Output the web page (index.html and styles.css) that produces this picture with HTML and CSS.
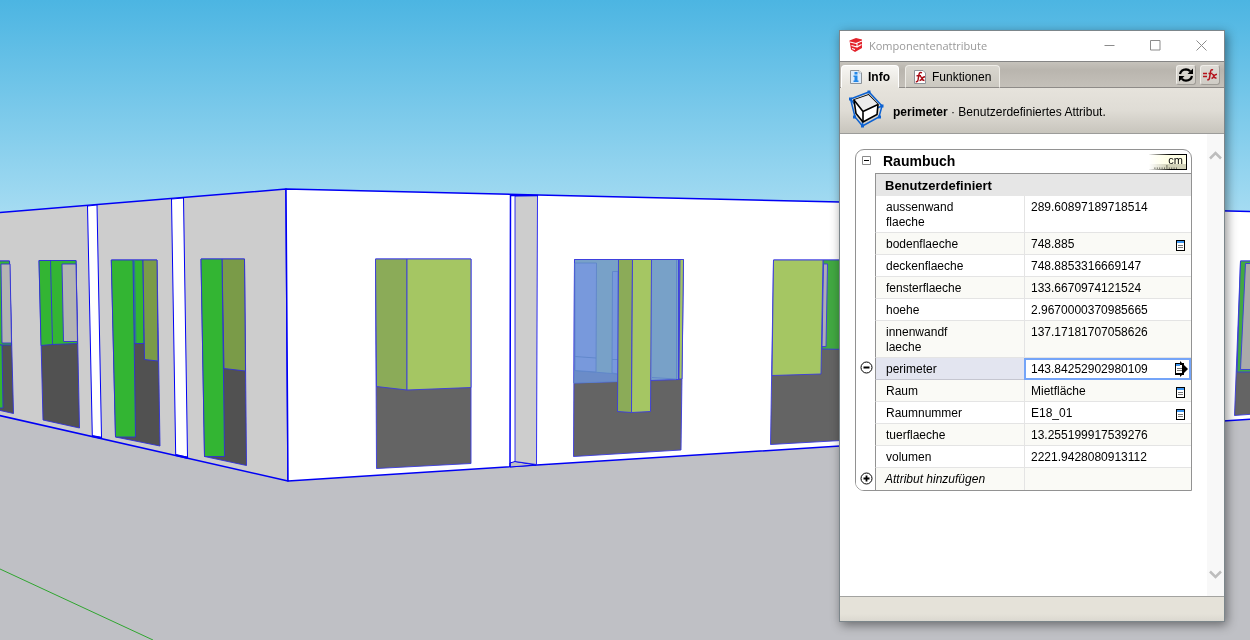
FILE: index.html
```html
<!DOCTYPE html>
<html lang="de">
<head>
<meta charset="utf-8">
<title>Komponentenattribute</title>
<link rel="stylesheet" href="styles.css">
</head>
<body>
<svg class="scene" viewBox="0 0 1250 640" preserveAspectRatio="xMinYMin slice" aria-hidden="true">
  <defs>
    <linearGradient id="sky" x1="0" y1="0" x2="0" y2="1">
      <stop offset="0" stop-color="#4cb5e2"/><stop offset="1" stop-color="#a6dcf2"/>
    </linearGradient>
  </defs>
  <rect width="1250" height="215" fill="url(#sky)"/>
  <rect y="213" width="1250" height="427" fill="#bfc0c5"/>
  <path d="M0 569 153 640" stroke="#2fa52f" fill="none"/>

  <!-- walls -->
  <g stroke="#0000f5" stroke-width="1.500" stroke-linejoin="round">
    <path d="M-5 213 286 189 288 481-5 414.500z" fill="#cdcdcd"/>
    <path d="M286 189 538 195 840 202 1255 211.500V419L840 446 537 465 288 481z" fill="#fff"/>
    <path d="M87.500 206 97 205 101.500 437.500 92.300 436z" fill="#fff" stroke-width="1"/>
    <path d="M171.500 199 183.500 198 187.500 457 175.700 455z" fill="#fff" stroke-width="1"/>
    <path d="M92 436 102 438M176 455 188 458" fill="none" stroke-width="2"/>
    <path d="M510 463 515 461.500 536 465 510 467z" fill="#bfc0c5" stroke-width="1"/>
    <path d="M515 196 537.500 195.500 536.500 464.500 515 461.500z" fill="#cdcdcd" stroke-width=".8"/>
    <path d="M510.500 195 510 467M510 195.500H538" fill="none"/>
  </g>

  <!-- openings of the side wall -->
  <g stroke="#3030d8" stroke-width=".9">
    <path d="M-2 261H9.500L13.500 413.500-2 410z" fill="#515151"/>
    <path d="M-2 261H9.500L11.500 345H-2z" fill="#33b533"/>
    <path d="M1 264H10L11.500 343H2z" fill="#b4b4b4"/>
    <path d="M-2 345H2L3 408H-2z" fill="#33b533"/>
    <path d="M39 260.500H76L79.500 428 43 420z" fill="#515151"/>
    <path d="M39 260.500H76L77.500 343.500 52 344.500 41 345.500z" fill="#33b533"/>
    <path d="M50.500 260 52.500 344" fill="none"/>
    <path d="M62 264H76L77.500 341.500H63.500z" fill="#b4b4b4"/>
    <path d="M111.300 260H157L160 446 115.500 437z" fill="#515151"/>
    <path d="M133 260H143L144 343.500H135z" fill="#33b533"/>
    <path d="M134 260 135.500 343" fill="none" stroke="#2a7f8a" stroke-width="2"/>
    <path d="M111.300 260H133L135.500 437H115.500z" fill="#33b533"/>
    <path d="M143 260H157L158 361 144.500 359.500z" fill="#7a9b48"/>
    <path d="M201 259H244.500L246.500 465.500 204.500 456.500z" fill="#515151"/>
    <path d="M222 259H244.500L245.500 371 224 368.500z" fill="#7a9b48"/>
    <path d="M201 259H222L224.500 456.500H204.500z" fill="#33b533"/>
  </g>

  <!-- openings of the front wall -->
  <g stroke="#3a3ae0" stroke-width=".9">
    <path d="M375.500 259H471V463.500L376.500 468.500z" fill="#646464"/>
    <path d="M375.500 259H407V390L376.500 386.500z" fill="#8bab58"/>
    <path d="M407 259H471V387.500L407 390z" fill="#a5c663"/>

    <path d="M574.500 259.500H683.500L681 450 573.500 456.500z" fill="#646464"/>
    <path d="M574.500 259.500H680L679 379.500 574 383z" fill="#78a1c8"/>
    <g stroke="#5f86c9">
      <path d="M574.500 370.500 618 374V381.500L574 383z" fill="#6b8cc8"/>
      <path d="M575 263H596.500L596 372 575 370.500z" fill="#7899dc"/>
      <path d="M612.500 271.500H618V374L612 373z" fill="#7899dc"/>
      <path d="M575 356.500 596 358M612 359.500H618M652 377.500 676 379M676.500 260V379" fill="none"/>
    </g>
    <path d="M680 259.500H683.500L682 379H679z" fill="#a5c663"/>
    <path d="M678.500 260V379" fill="none"/>
    <path d="M618.500 259.500H632.500L631.500 412.500 617.500 411.500z" fill="#8bab58"/>
    <path d="M632.500 259.500H651.500L650.500 411.500 631.500 412.500z" fill="#a5c663"/>

    <path d="M773.500 260H850V440L770.500 444.500z" fill="#646464"/>
    <path d="M823 260H850V349.500L822 349z" fill="#42a942"/>
    <path d="M823.500 264H827.500L826 346.500H822z" fill="#adadb3"/>
    <path d="M773.500 260H823L821 374 772 375.500z" fill="#a5c663"/>

    <path d="M1240.500 261H1255V414L1234.500 415.500z" fill="#646464"/>
    <path d="M1240.500 261H1255V372H1237z" fill="#42a942"/>
    <path d="M1245.500 263.500H1255V369.500H1240.500z" fill="#aaa"/>
  </g>
</svg>

<main class="desktop">
  <section class="window" aria-labelledby="window-title">
    <header class="titlebar">
      <svg class="app-icon" viewBox="0 0 14 14">
        <path d="M.5 2.500 7 0 13 1.500V10L6 14 2 11.500z" fill="#e3232c"/>
        <path d="M1 4 7 5.500 13 3M2.500 7.500 8 9V5.500M8 9 12.500 6.500M3 10.500 6 11.500" fill="none" stroke="#fff" stroke-width="1.100"/>
      </svg>
      <h1 class="title" id="window-title">Komponentenattribute</h1>
      <div class="window-buttons">
        <button class="window-button" aria-label="Minimieren"><svg viewBox="0 0 11 11"><path d="M.5 5.500H10.500"/></svg></button>
        <button class="window-button" aria-label="Maximieren"><svg viewBox="0 0 11 11"><path d="M.5.500H10V10H.5z"/></svg></button>
        <button class="window-button" aria-label="Schließen"><svg viewBox="0 0 11 11"><path d="M.5.500 10.500 10.500M10.500.500.500 10.500"/></svg></button>
      </div>
    </header>

    <nav class="tabbar">
      <button class="tab tab-active">
        <svg class="tab-icon" viewBox="0 0 12 14">
          <path d="M.5.500H9L11.500 3V13.500H.5z" fill="#dcebfa" stroke="#8d9399"/>
          <path d="M9 .5V3H11.500" fill="#fff" stroke="#8d9399" stroke-width=".6"/>
          <path d="M4.500 2H7.500V4.500H4.500zM3.500 5.500H7.500V10.500H8.500V12H3.500V10.500H4.500V7H3.500z" fill="#2287e8"/>
        </svg>Info
      </button>
      <button class="tab">
        <svg class="tab-icon" viewBox="0 0 12 14">
          <path d="M.5.500H9L11.500 3V13.500H.5z" fill="#fff" stroke="#8d9399"/>
          <path d="M8 2.800Q5.500 1.800 5 4.500L4 10Q3.500 12.300 1.800 11.500M2.500 5.800H7M6.200 7Q7.500 6.500 8 8.500T10.500 10.500M11 6.800Q9 6.800 8 8.700T5.500 10.500" fill="none" stroke="#a80d16" stroke-width="1.400"/>
        </svg>Funktionen
      </button>
      <div class="tools">
        <button class="tool" aria-label="Aktualisieren">
          <svg viewBox="0 0 16 16"><path d="M2 7Q3 2.500 8 2.300 10.500 2.300 12.200 4.200M14 9Q13 13.500 8 13.700 5.500 13.700 3.800 11.800" fill="none" stroke="#000" stroke-width="2.200"/><path d="M15 1.500V7H9.500zM1 14.500V9H6.500z"/></svg>
        </button>
        <button class="tool" aria-label="Formeln anzeigen">
          <svg viewBox="0 0 16 16"><path d="M1 6.500H5M1 9.500H5M11 3Q9 2 8.500 4.800L7.500 11Q7 13.300 5.300 12.500M6.500 6.500H10.500M10 7.500Q11.300 7 11.800 9T14.500 11.300M15 7.300Q12.800 7.500 11.800 9.300T9.500 11.500" fill="none" stroke="#b5121b" stroke-width="1.500"/></svg>
        </button>
      </div>
    </nav>

    <div class="summary">
      <svg class="cube" viewBox="0 0 36 38">
        <path d="M2.500 9 21 2 34 16 31 27 14.500 36 7 27z" fill="none" stroke="#0d62d2" stroke-width="1.500"/>
        <path d="M2.500 9 14.500 24 34 16M14.500 24V36" fill="none" stroke="#0d62d2" stroke-width="1.500"/>
        <path d="M6 10 20.500 5 30 14.500 29 24.500 15 32 8 23.500z" fill="#fff" stroke="#000" stroke-width="1.600"/>
        <path d="M6 10 20.500 5 30 14.500 15 21.500z" fill="#ececec"/>
        <path d="M6 10 15 21.500 30 14.500M15 21.500V32" fill="none" stroke="#000" stroke-width="1.600"/>
        <path d="M1 7.500H4V10.500H1zM19.500.500H22.500V3.500H19.500zM32.500 14.500H35.500V17.500H32.500zM30 25.500H33V28.500H30zM13 34.500H16V37.500H13zM5 25.500H8V28.500H5z" fill="#0d62d2"/>
      </svg>
      <p class="summary-text"><b>perimeter</b> · Benutzerdefiniertes Attribut.</p>
    </div>

    <div class="body">
      <div class="content">
        <section class="card">
          <header class="card-header">
            <button class="collapse" aria-label="Einklappen"><svg viewBox="0 0 9 9"><path d="M.5.500H8.500V8.500H.5z" fill="#fff" stroke="#8a8a8a"/><path d="M2 4.500H7" stroke="#000"/></svg></button>
            <h2 class="card-title">Raumbuch</h2>
            <button class="unit">cm
              <svg class="ruler" viewBox="0 0 37 5"><path d="M6.500 5V3M9.500 5V3M12.500 5V3M15.500 5V3M18.500 5V3M21.500 5V0M24.500 5V3M27.500 5V3M30.500 5V3M33.500 5V3" stroke="#55554a" fill="none"/></svg>
            </button>
          </header>
          <table class="attributes">
            <colgroup><col class="col-gutter"><col class="col-name"><col></colgroup>
            <thead>
              <tr><td class="gutter"></td><th class="group" colspan="2">Benutzerdefiniert</th></tr>
            </thead>
            <tbody>
              <tr><td class="gutter"></td><th class="name">aussenwand<br>flaeche</th><td class="value">289.60897189718514</td></tr>
              <tr><td class="gutter"></td><th class="name">bodenflaeche</th><td class="value"><div class="value-line">748.885<button class="details" aria-label="Details zu bodenflaeche"><svg viewBox="0 0 10 12"><path d="M0 1H9V12H0z"/><path d="M1 2H8V11H1z" fill="#fff"/><path d="M1 2H8V4H1z" fill="#3c96f0"/><path d="M2 6.500H7M2 8.500H7" stroke="#777"/></svg></button></div></td></tr>
              <tr><td class="gutter"></td><th class="name">deckenflaeche</th><td class="value">748.8853316669147</td></tr>
              <tr><td class="gutter"></td><th class="name">fensterflaeche</th><td class="value">133.6670974121524</td></tr>
              <tr><td class="gutter"></td><th class="name">hoehe</th><td class="value">2.9670000370985665</td></tr>
              <tr><td class="gutter"></td><th class="name">innenwandf<br>laeche</th><td class="value">137.17181707058626</td></tr>
              <tr class="selected">
                <td class="gutter"><button class="round" aria-label="Attribut entfernen"><svg viewBox="0 0 13 13"><circle cx="6.500" cy="6.500" r="5.500" fill="#fff" stroke="#000"/><path d="M3.500 6.500H9.500" stroke="#000" stroke-width="1.800"/></svg></button></td>
                <th class="name"><label for="perimeter">perimeter</label></th>
                <td class="value value-edit"><div class="editor"><input class="field" id="perimeter" value="143.84252902980109"><button class="more" aria-label="Details zu perimeter"><svg viewBox="0 0 13 16"><path d="M0 2H9V14H0z"/><path d="M1 3H7V12H1z" fill="#fff"/><path d="M1 3H5V5H1z" fill="#3c96f0"/><path d="M2 7.500H7M2 9.500H7" stroke="#777"/><path d="M5 0 13 8 5 16V12H7V4H5z"/></svg></button></div></td>
              </tr>
              <tr><td class="gutter"></td><th class="name">Raum</th><td class="value"><div class="value-line">Mietfläche<button class="details" aria-label="Details zu Raum"><svg viewBox="0 0 10 12"><path d="M0 1H9V12H0z"/><path d="M1 2H8V11H1z" fill="#fff"/><path d="M1 2H8V4H1z" fill="#3c96f0"/><path d="M2 6.500H7M2 8.500H7" stroke="#777"/></svg></button></div></td></tr>
              <tr><td class="gutter"></td><th class="name">Raumnummer</th><td class="value"><div class="value-line">E18_01<button class="details" aria-label="Details zu Raumnummer"><svg viewBox="0 0 10 12"><path d="M0 1H9V12H0z"/><path d="M1 2H8V11H1z" fill="#fff"/><path d="M1 2H8V4H1z" fill="#3c96f0"/><path d="M2 6.500H7M2 8.500H7" stroke="#777"/></svg></button></div></td></tr>
              <tr><td class="gutter"></td><th class="name">tuerflaeche</th><td class="value">13.255199917539276</td></tr>
              <tr><td class="gutter"></td><th class="name">volumen</th><td class="value">2221.9428080913112</td></tr>
              <tr class="add">
                <td class="gutter"><button class="round" aria-label="Attribut hinzufügen"><svg viewBox="0 0 13 13"><circle cx="6.500" cy="6.500" r="5.500" fill="#fff" stroke="#000"/><path d="M3.500 6.500H9.500M6.500 3.500V9.500" stroke="#000" stroke-width="1.800"/></svg></button></td>
                <th class="name">Attribut hinzufügen</th><td class="value"></td>
              </tr>
            </tbody>
          </table>
        </section>
      </div>
      <div class="scrollbar">
        <button class="scroll-button" aria-label="Nach oben"><svg viewBox="0 0 13 9"><path d="M1 7.500 6.500 2 12 7.500"/></svg></button>
        <button class="scroll-button" aria-label="Nach unten"><svg viewBox="0 0 13 9"><path d="M1 1.500 6.500 7 12 1.500"/></svg></button>
      </div>
    </div>
    <footer class="statusbar"></footer>
  </section>
</main>
</body>
</html>
```

FILE: styles.css
```css
* { box-sizing: border-box; }

body {
  margin: 0;
  background: #bfc0c5;
  color: #000;
  font: 12px/15px "Liberation Sans", Arial, sans-serif;
}

button {
  margin: 0;
  padding: 0;
  border: 0;
  background: none;
  color: inherit;
  font: inherit;
}

svg { display: block; }

/* The model view fills the screen behind the dialog. */
.scene {
  position: fixed;
  inset: 0;
  width: 100%;
  height: 100%;
}

.desktop {
  position: relative;
  display: flex;
  justify-content: flex-end;
  min-height: 100vh;
  padding: 30px 25px 18px;
}

.window {
  display: flex;
  flex-direction: column;
  flex: 0 1 386px;
  border: 1px solid #7c868b;
  background: #fff;
  box-shadow: 2px 3px 10px rgba(0, 0, 0, .45);
}

.titlebar {
  display: flex;
  align-items: flex-start;
  height: 30px;
  padding-left: 9px;
}

.app-icon {
  width: 14px;
  height: 14px;
  margin-top: 7px;
}

.title {
  flex: 1;
  margin: 7px 0 0 6px;
  color: #999;
  font: 11px/16px "Open Sans", "Noto Sans", sans-serif;
}

.window-buttons { display: flex; }

.window-button {
  display: grid;
  place-items: center;
  width: 46px;
  height: 28px;
}

.window-button svg {
  width: 11px;
  height: 11px;
  fill: none;
  stroke: #8c8c8c;
}

.tabbar {
  display: flex;
  align-items: flex-end;
  gap: 6px;
  height: 27px;
  padding-left: 1px;
  border-top: 1px solid #858585;
  background: linear-gradient(#c5c2bb, #b9b5ae 30%, #c5c1ba);
  box-shadow: inset 0 -1px #8e8b88;
}

.tab {
  display: flex;
  align-items: center;
  gap: 6px;
  height: 23px;
  padding: 1px 8px 0;
  border: 1px solid #eeece7;
  border-bottom: 1px solid #8e8b88;
  border-radius: 4px 4px 0 0;
  background: linear-gradient(#d9d6cf, #cbc8c0);
}

.tab-active {
  border-color: #fff;
  border-bottom-color: #e6e3dc;
  background: linear-gradient(#f7f6f3, #e6e3dc);
  font-weight: bold;
}

.tab-icon { width: 12px; height: 14px; }

.tools {
  display: flex;
  gap: 4px;
  margin: 0 4px 3px auto;
}

.tool {
  display: grid;
  place-items: center;
  width: 20px;
  height: 20px;
  border: 1px solid #efede8;
  border-right-color: #a09d97;
  border-bottom-color: #a09d97;
  border-radius: 3px;
  background: linear-gradient(#dedbd5, #cfccc5);
}

.tool svg { width: 16px; height: 16px; }

.summary {
  display: flex;
  align-items: center;
  gap: 9px;
  height: 46px;
  padding: 0 8px;
  border-bottom: 1px solid #9c9c9a;
  background: linear-gradient(#e6e3dc, #dfdcd5 50%, #c8c5bd);
}

.cube {
  width: 36px;
  height: 38px;
  margin-bottom: 4px;
}

.summary-text { margin: 4px 0 0; }

.body {
  display: flex;
  flex: 1;
}

.content {
  flex: 1;
  padding: 15px;
}

.card {
  overflow: hidden;
  border: 1px solid #929292;
  border-radius: 9px 9px 0 9px;
}

.card-header {
  display: flex;
  align-items: flex-start;
  height: 23px;
  padding: 0 4px 0 6px;
}

.collapse,
.collapse svg { width: 9px; height: 9px; }

.collapse { margin-top: 6px; }

.card-title {
  flex: 1;
  margin: 2px 0 0 12px;
  font-size: 14px;
  line-height: 18px;
}

.unit {
  display: flex;
  flex-direction: column;
  align-items: flex-end;
  width: 38px;
  height: 16px;
  margin-top: 4px;
  padding-right: 3px;
  border: 1px solid #000;
  border-left: 0;
  border-image: linear-gradient(90deg, transparent, #000 60%) 1;
  border-image-width: 1px 1px 1px 0;
  background: linear-gradient(90deg, #fff, rgba(255, 255, 255, 0) 50%), linear-gradient(#ffffe6 65%, #d2d2b8 65%);
  font-size: 11px;
  line-height: 10px;
}

.ruler { width: 37px; height: 5px; }

.attributes {
  width: 100%;
  border-spacing: 0;
  table-layout: fixed;
}

.col-gutter { width: 19px; }
.col-name { width: 149px; }

.attributes th,
.attributes td {
  padding: 0;
  text-align: left;
  vertical-align: top;
}

.attributes .gutter {
  border: 0;
  background: #fff;
}

.attributes .group {
  height: 23px;
  padding: 4px 9px 2px;
  border-top: 1px solid #929292;
  border-left: 1px solid #929292;
  background: #e6e6e6;
  font-size: 13px;
  line-height: 16px;
}

.attributes .name {
  padding: 4px 9px 2px 10px;
  border-bottom: 1px solid #e4e4e4;
  border-left: 1px solid #929292;
  font-weight: normal;
}

.attributes .value {
  padding: 4px 5px 2px 6px;
  border-bottom: 1px solid #e4e4e4;
  border-left: 1px solid #e4e4e4;
}

.attributes tbody tr:nth-child(even) { background: #fafaf6; }

.value-line {
  display: flex;
  align-items: center;
  justify-content: space-between;
}

.details,
.details svg { width: 10px; height: 12px; }

.attributes .selected .name {
  border-bottom-color: #c5c6d0;
  background: #e3e5f0;
}

.attributes .value-edit {
  padding: 0;
  border: 0;
}

.editor {
  display: flex;
  align-items: center;
  height: 22px;
  padding: 0 1px 0 5px;
  border: 2px solid #74a4f8;
}

.field {
  flex: 1;
  min-width: 0;
  padding: 0;
  border: 0;
  outline: 0;
  background: #fff;
  color: inherit;
  font: inherit;
}

.more,
.more svg { width: 13px; height: 16px; }

.round {
  display: block;
  margin: 3px 0 0 4px;
}

.round,
.round svg { width: 13px; height: 13px; }

.add .round { margin-top: 4px; }

.attributes .add .name {
  padding: 4px 9px 3px;
  border-bottom: 0;
  font-style: italic;
}

.attributes .add .value { border-bottom: 0; }

.scrollbar {
  display: flex;
  flex-direction: column;
  justify-content: space-between;
  align-items: center;
  width: 17px;
  padding: 17px 0;
  background: #f8f8f8;
}

.scroll-button,
.scroll-button svg { width: 13px; height: 9px; }

.scroll-button svg {
  fill: none;
  stroke: #bdbdbd;
  stroke-width: 2.5;
}

.statusbar {
  height: 25px;
  border-top: 1px solid #a3a3a0;
  background: linear-gradient(#e5e2d9 70%, #dbd8d0);
}
```
